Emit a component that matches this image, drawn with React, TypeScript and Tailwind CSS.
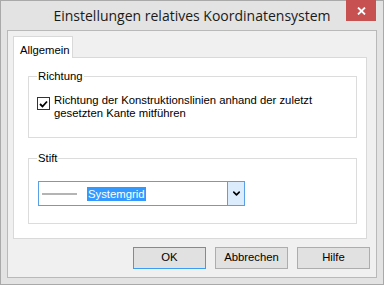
import { ChevronDown } from "lucide-react";

/* Windows 8 style dialog: frame, tab page with two group boxes, button row. */

function GroupBox({ label, className, children }: { label: string; className: string; children?: React.ReactNode }) {
  return (
    <div className={`relative border border-[#dcdcdc] ${className}`}>
      <span className="absolute left-[8px] top-[-8px] bg-white px-[1px] leading-[14px]">{label}</span>
      {children}
    </div>
  );
}

function DialogButton({ label, primary }: { label: string; primary?: boolean }) {
  return (
    <button
      className={`flex h-[22px] w-[73px] items-center justify-center border bg-[#e1e1e1] text-[11.3px] leading-none text-black ${
        primary ? "border-[#3c9df0]" : "border-[#adadad]"
      }`}
    >
      {label}
    </button>
  );
}

export default function App() {
  return (
    <div
      className="flex h-[285px] w-[384px] flex-col border border-[#a9a9a9] bg-[#e3e3e3] text-[11.3px] text-black"
      style={{ fontFamily: '"Liberation Sans", Arial, sans-serif' }}
    >
      {/* Title bar */}
      <div className="relative flex h-[29px] shrink-0 items-center justify-center">
        <span className="pb-[1px] text-[14px] text-[#1a1a1a]" style={{ fontFamily: '"Open Sans", "Noto Sans", sans-serif' }}>
          Einstellungen relatives Koordinatensystem
        </span>
        <div className="absolute right-[7px] top-[-1px] flex h-[21px] w-[30px] items-center justify-center bg-[#c75050]">
          <svg width="9" height="8" viewBox="0 0 9 8">
            <path d="M1 0.5 L8 7.5 M8 0.5 L1 7.5" stroke="white" strokeWidth="1.8" />
          </svg>
        </div>
      </div>

      {/* Client area */}
      <div className="mx-[6px] flex h-[248px] flex-col border border-[#b9b9b9] bg-[#f0f0f0]">
        {/* Tab strip */}
        <div className="ml-[5px] mt-[5px] flex">
          <div className="relative z-10 mb-[-1px] flex h-[22px] w-[60px] items-start border border-b-0 border-[#d9d9d9] bg-white pl-[6px] pt-[5px]">
            Allgemein
          </div>
        </div>

        {/* Tab page */}
        <div className="ml-[5px] h-[182px] w-[354px] border border-[#d9d9d9] bg-white pt-[18px] pl-[14px]">
          <GroupBox label="Richtung" className="h-[62px] w-[329px]">
            <div className="mt-[17px] ml-[8px] flex items-start gap-[4px]">
              <div className="mt-[3px] flex h-[13px] w-[13px] shrink-0 items-center justify-center border border-[#333] bg-white">
                <svg width="9" height="8" viewBox="0 0 9 8">
                  <path d="M1 4 L3.5 6.5 L8 1.5" fill="none" stroke="#000" strokeWidth="1.8" />
                </svg>
              </div>
              <p className="leading-[13px]">
                Richtung der Konstruktionslinien anhand der zuletzt
                <br />
                gesetzten Kante mitführen
              </p>
            </div>
          </GroupBox>

          <GroupBox label="Stift" className="mt-[20px] h-[66px] w-[329px]">
            <div className="mt-[22px] ml-[9px] flex h-[25px] w-[207px] items-center border border-[#5aa0e6] bg-white">
              <div className="ml-[3px] h-[2px] w-[35px] bg-[#b4b4b4]" />
              <span className="ml-[10px] bg-[#3399ff] px-[1px] leading-[14px] text-white">Systemgrid</span>
              <div className="ml-auto flex h-full w-[17px] items-center justify-center border-l border-[#5aa0e6] bg-[#dcecfc]">
                <ChevronDown size={11} strokeWidth={3.5} color="#000" />
              </div>
            </div>
          </GroupBox>
        </div>

        {/* Buttons */}
        <div className="mr-[6px] mt-[8px] flex justify-end gap-[9px]">
          <DialogButton label="OK" primary />
          <DialogButton label="Abbrechen" />
          <DialogButton label="Hilfe" />
        </div>
      </div>
    </div>
  );
}
